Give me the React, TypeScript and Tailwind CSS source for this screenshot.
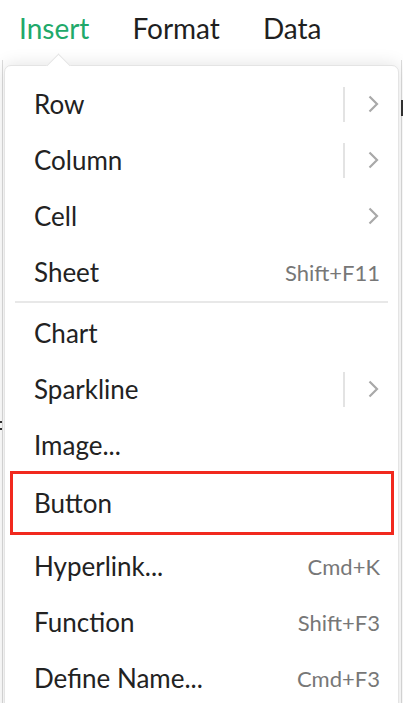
import { ReactNode } from 'react'

type Item = {
  label: string
  shortcut?: string
  sub?: 'split' | 'plain'
  highlight?: boolean
}

const top: Item[] = [
  { label: 'Row', sub: 'split' },
  { label: 'Column', sub: 'split' },
  { label: 'Cell', sub: 'plain' },
  { label: 'Sheet', shortcut: 'Shift+F11' },
]

const bottom: Item[] = [
  { label: 'Chart' },
  { label: 'Sparkline', sub: 'split' },
  { label: 'Image...' },
  { label: 'Button', highlight: true },
  { label: 'Hyperlink...', shortcut: 'Cmd+K' },
  { label: 'Function', shortcut: 'Shift+F3' },
  { label: 'Define Name...', shortcut: 'Cmd+F3' },
]

function Chevron() {
  return (
    <svg width="13" height="20" viewBox="0 0 13 20" fill="none">
      <path d="M2.5 2.5 L10 10 L2.5 17.5" stroke="#a9a9a9" strokeWidth="2.2" />
    </svg>
  )
}

function Row({ item }: { item: Item }) {
  let right: ReactNode = null
  if (item.shortcut) {
    right = <span className="text-[22px] text-[#777]">{item.shortcut}</span>
  } else if (item.sub === 'split') {
    right = (
      <div className="flex items-center">
        <div className="w-[2px] h-[35px] bg-[#e3e3e3] mr-[22px]" />
        <Chevron />
      </div>
    )
  } else if (item.sub === 'plain') {
    right = <Chevron />
  }

  if (item.highlight) {
    return (
      <div className="-mt-[2px] mb-[3px] ml-[5px] mr-[4px] h-[64px] border-[3px] border-[#f1291e] flex items-center pl-[21px] pr-[12px]">
        <span className="text-[26px] text-[#222]">{item.label}</span>
      </div>
    )
  }

  return (
    <div className="h-[56px] flex items-center justify-between pl-[29px] pr-[18px]">
      <span className="text-[26px] text-[#222]">{item.label}</span>
      {right}
    </div>
  )
}

export default function App() {
  return (
    <div
      className="relative w-[403px] h-[703px] overflow-hidden bg-white"
      style={{ fontFamily: 'Lato, "Noto Sans", sans-serif' }}
    >
      {/* spreadsheet grid peeking out at the edges */}
      <div className="absolute left-[2px] top-[60px] bottom-0 w-px bg-[#dcdcdc]" />
      <div className="absolute right-[1px] top-[60px] bottom-0 w-px bg-[#dcdcdc]" />
      <div className="absolute right-0 top-[100px] w-[2px] h-[16px] bg-[#333]" />
      <div className="absolute left-0 top-[421px] w-[2px] h-[2px] bg-[#333]" />
      <div className="absolute left-0 top-[428px] w-[2px] h-[2px] bg-[#333]" />

      <div className="flex items-center h-[56px] pl-[19px] gap-[43px] text-[28px] text-[#1f1f1f]">
        <span className="text-[#21a96a]">Insert</span>
        <span>Format</span>
        <span>Data</span>
      </div>

      <div className="relative ml-[4px] mt-[9px] w-[395px] bg-white rounded-[7px] border border-[#e4e4e4] shadow-[0_0_18px_rgba(0,0,0,0.12)] pt-[10px] pb-[20px]">
        <div className="absolute left-[45px] -top-[9px] w-[17px] h-[17px] rotate-45 bg-white border-l border-t border-[#e4e4e4]" />
        <div className="relative">
          {top.map((it) => (
            <Row key={it.label} item={it} />
          ))}
          <div className="mx-[10px] mt-[1px] mb-[2px] h-[2px] bg-[#e8e8e8]" />
          {bottom.map((it) => (
            <Row key={it.label} item={it} />
          ))}
        </div>
      </div>
    </div>
  )
}
